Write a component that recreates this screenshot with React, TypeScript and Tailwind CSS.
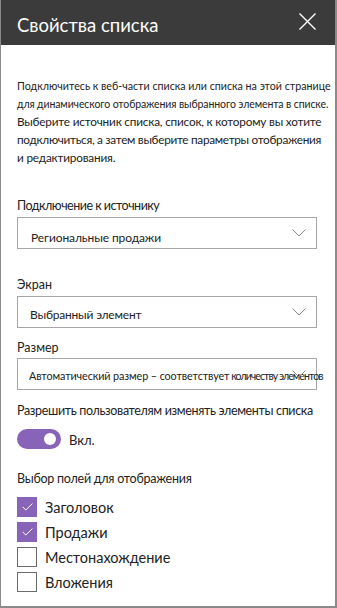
const font = { fontFamily: "Lato, 'Liberation Sans', sans-serif" };

function Chevron() {
  return (
    <svg width="14" height="8" viewBox="0 0 14 8" className="absolute right-[10px] top-1/2 -translate-y-1/2">
      <polyline points="0.5,0.5 7,7 13.5,0.5" fill="none" stroke="#8a8a8a" strokeWidth="1" />
    </svg>
  );
}

function Dropdown({ children, pad }: { children: React.ReactNode; pad: string }) {
  return (
    <div className="relative h-[32px] border border-[#a6a6a6] flex items-center">
      <span className={"whitespace-nowrap leading-[16px] text-[#222] " + pad}>{children}</span>
      <Chevron />
    </div>
  );
}

function Box({ label, on }: { label: string; on?: boolean }) {
  return (
    <div className="flex items-center h-[25px]">
      {on ? (
        <div className="w-[20px] h-[20px] bg-[#8764b8] flex items-center justify-center">
          <svg width="11" height="8" viewBox="0 0 11 8">
            <polyline points="0.6,3.8 3.8,7 10.4,0.6" fill="none" stroke="#fff" strokeWidth="1" />
          </svg>
        </div>
      ) : (
        <div className="w-[20px] h-[20px] border border-[#6b6b6b] bg-white" />
      )}
      <span className="ml-[8px] pt-[3px] text-[14.5px] leading-[18px] text-[#222]">{label}</span>
    </div>
  );
}

export default function App() {
  return (
    <div style={font} className="w-[337px] h-[608px] bg-white border-l border-r-2 border-b-2 border-[#8a8a8a] flex flex-col">
      <div className="h-[45px] bg-[#3b3b3b] flex items-center justify-between pl-[16px] pr-[19px] shrink-0">
        <span className="pt-[5px] text-[18.5px] leading-[24px] text-white">Свойства списка</span>
        <svg width="17" height="17" viewBox="0 0 17 17" className="mt-[-2px]">
          <path d="M0.5 0.5 L16.5 16.5 M16.5 0.5 L0.5 16.5" stroke="#fff" strokeWidth="1.4" />
        </svg>
      </div>

      <div className="pl-[16px] pr-[13px] pt-[32px] text-[#222]">
        <p className="text-[10.7px] leading-[18px] whitespace-nowrap">
          Подключитесь к веб-части списка или списка на этой странице
        </p>
        <p className="text-[10.5px] leading-[18px] whitespace-nowrap tracking-[-0.1px]">
          для динамического отображения выбранного элемента в списке.
        </p>
        <p className="text-[11.8px] leading-[18px] whitespace-nowrap tracking-[-0.2px]">
          Выберите источник списка, список, к которому вы хотите
        </p>
        <p className="text-[11.8px] leading-[18px] whitespace-nowrap tracking-[-0.3px]">
          подключиться, а затем выберите параметры отображения
        </p>
        <p className="text-[11.8px] leading-[18px] whitespace-nowrap tracking-[-0.2px]">
          и редактирования.
        </p>

        <div className="mt-[29px] text-[12.5px] leading-[20px] tracking-[-0.5px]">Подключение к источнику</div>
        <div className="mt-[1px] mr-[5px]">
          <Dropdown pad="pl-[13px] pt-[10px] text-[12px] tracking-[-0.1px]">Региональные продажи</Dropdown>
        </div>

        <div className="mt-[26px] text-[12.5px] leading-[20px]">Экран</div>
        <div className="mt-[1px] mr-[5px]">
          <Dropdown pad="pl-[12px] pt-[6px] text-[12px] tracking-[-0.2px]">Выбранный элемент</Dropdown>
        </div>

        <div className="mt-[10px] text-[12.5px] leading-[20px]">Размер</div>
        <div className="mr-[5px]">
          <Dropdown pad="pl-[11px] pt-[3px] text-[10.8px] tracking-[-0.1px]">
            Автоматический размер – соответствует
            <span className="text-[10.5px] tracking-[-0.9px]"> количеству элементов</span>
          </Dropdown>
        </div>

        <div className="mt-[11px] text-[12.5px] leading-[20px] whitespace-nowrap tracking-[-0.35px]">
          Разрешить пользователям изменять элементы списка
        </div>
        <div className="mt-[7px] flex items-center">
          <div className="w-[44px] h-[20px] rounded-full bg-[#8764b8] flex items-center justify-end pr-[5px]">
            <div className="w-[12px] h-[12px] rounded-full bg-white" />
          </div>
          <span className="ml-[8px] pt-[3px] text-[13px] leading-[18px]">Вкл.</span>
        </div>

        <div className="mt-[20px] text-[12.5px] leading-[20px] tracking-[-0.25px]">Выбор полей для отображения</div>
        <div className="mt-[5px] flex flex-col">
          <Box on label="Заголовок" />
          <Box on label="Продажи" />
          <Box label="Местонахождение" />
          <Box label="Вложения" />
        </div>
      </div>
    </div>
  );
}
